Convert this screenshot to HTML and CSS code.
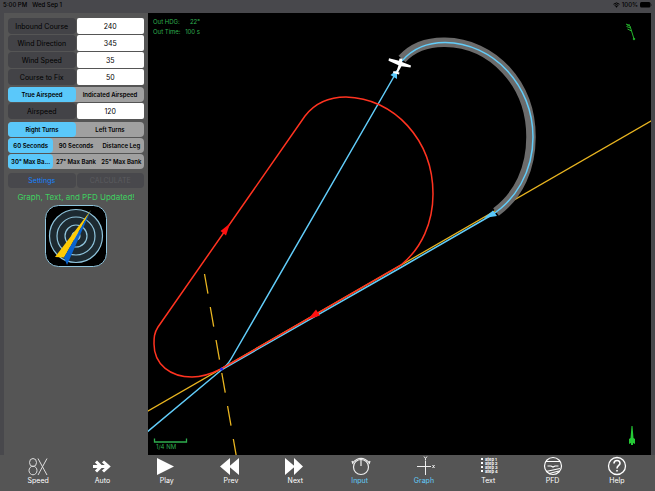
FILE: index.html
```html
<!DOCTYPE html>
<html lang="en">

<head>
  <meta charset="UTF-8">
  <meta name="viewport" content="width=device-width, initial-scale=1.0">
  <title>Holding Pattern</title>
  <link rel="stylesheet" href="styles.css">
</head>

<body>
  <header class="status">
    <span>5:00 PM</span>
    <span>Wed Sep 1</span>
    <span class="battery">
      <svg width="7" height="6" viewBox="0 0 14 12">
        <path d="M1 4.500Q7-1 13 4.500M3.300 7Q7 3.500 10.700 7" fill="none" stroke="#000" stroke-width="2" />
        <path d="M4.500 8.500Q7 6 9.500 8.500L7 11.500z" />
      </svg>
      100%
      <svg width="12" height="6" viewBox="0 0 24 12">
        <rect width="21" height="11" rx="3" />
        <path d="M22 4v4q2-2 0-4" />
      </svg>
    </span>
  </header>

  <main class="main">
    <form class="panel">
      <div class="fields">
        <label for="inbound">Inbound Course</label>
        <input type="text" id="inbound" value="240">
        <label for="winddir">Wind Direction</label>
        <input type="text" id="winddir" value="345">
        <label for="windspeed">Wind Speed</label>
        <input type="text" id="windspeed" value="35">
        <label for="fix">Course to Fix</label>
        <input type="text" id="fix" value="50">
      </div>
      <div class="segment">
        <label><input type="radio" name="speedtype" checked>True Airspeed</label>
        <label><input type="radio" name="speedtype">Indicated Airspeed</label>
      </div>
      <div class="fields">
        <label for="airspeed">Airspeed</label>
        <input type="text" id="airspeed" value="120">
      </div>
      <div class="segments">
        <div class="segment">
          <label><input type="radio" name="turns" checked>Right Turns</label>
          <label><input type="radio" name="turns">Left Turns</label>
        </div>
        <div class="segment">
          <label><input type="radio" name="leg" checked>60 Seconds</label>
          <label><input type="radio" name="leg">90 Seconds</label>
          <label><input type="radio" name="leg">Distance Leg</label>
        </div>
        <div class="segment">
          <label><input type="radio" name="bank" checked>30° Max Ba...</label>
          <label><input type="radio" name="bank">27° Max Bank</label>
          <label><input type="radio" name="bank">25° Max Bank</label>
        </div>
      </div>
      <div class="actions">
        <button type="button" class="settings">Settings</button>
        <button type="button" class="calculate" disabled>CALCULATE</button>
      </div>
      <p class="message">Graph, Text, and PFD Updated!</p>
      <svg class="logo" width="62" height="62" viewBox="0 0 62 62">
        <rect x="0.500" y="0.500" width="61" height="61" rx="13" fill="#000" stroke="#8fc4dc" />
        <g fill="#1d2a31" stroke="#8fc4dc" stroke-width="1.200">
          <circle cx="31" cy="31" r="26.500" />
          <circle cx="31" cy="31" r="19" />
          <circle cx="31" cy="31" r="11" />
          <circle cx="31" cy="31" r="4" fill="#b9dcea" />
        </g>
        <path d="M46 5L10 52l9 0.500z" fill="#ffcb05" />
        <path d="M46 5L19 52.500l3 7.500z" fill="#0a63cf" />
      </svg>
    </form>

    <svg class="graph" viewBox="148 13 503 442" preserveAspectRatio="xMidYMid slice">
      <!-- inbound course and abeam line -->
      <g fill="none" stroke="#e9b520" stroke-width="1.300">
        <path d="M652 120.500L147 411.500" />
        <path d="M204.500 274L237 460" stroke-dasharray="20 13.500" />
      </g>

      <!-- flown track -->
      <path d="M402 59C413 47 428 42 445 42.300C493 43 531 84 531 137C531 168 519 195 496 212" fill="none" stroke="#6b6b6b" stroke-width="9.500" />
      <g fill="none" stroke="#62cdfa" stroke-width="1.500">
        <path d="M402 61C413 48 428 42.500 445 42.500C493 43 533 85 533 137C533 172 515 201 490 216L400 268L222 369.500L147 432" />
        <path d="M396 73L231 359Q227 366 221 369" />
      </g>

      <!-- hold -->
      <path d="M221 369L401 265C422 248 433 222 433 194C433 140 394 98 346 97C329 97 315 103 305 116L158 327C154 333 154 338 154 344C154 365 171 377 192 377C203 377 213 373 221 369" fill="none" stroke="#ff3320" stroke-width="1.500" />
      <path d="M230 223.500L220.500 231L226 235.500z" fill="#ff1010" />
      <path d="M308 319.500L316 309.500L320 315.500z" fill="#ff1010" />
      <path d="M484 218L493 210.500L497 216z" fill="#5ac8fa" />
      <path d="M397 70L390.500 75L397 79z" fill="#5ac8fa" />
      <circle cx="221.500" cy="369" r="1.500" fill="#2222ff" />

      <!-- airplane -->
      <g fill="#fff">
        <path d="M399.500 58.500h3l-0.500 3.500l9 3.500l-0.500 2l-9-1.300l-4 7l-1.500-0.500l2.500-7.500l-10-4.500l0.500-2.500l10 2.500z" />
        <path d="M393.500 71l6 1.500l-0.500 2l-6-1.500z" />
      </g>

      <!-- wind arrow -->
      <g stroke="#24b52c" stroke-width="1" fill="none">
        <path d="M634 39L630 26M630 26l-4-2M630.500 28l-4-1.500M631.500 31l-4-2M630 25l-3 0" />
        <circle cx="634" cy="39" r="0.800" fill="#24b52c" />
      </g>

      <!-- north arrow -->
      <path d="M631.500 426h1l1 12l1.500 1v5l-2-1v2h-2v-2l-2 1v-5l1.500-1z" fill="#25c936" />

      <!-- scale and readout -->
      <path d="M154.500 438.500v3.500h32v-3.500" fill="none" stroke="#2fae4f" stroke-width="1.300" />
      <g class="readout">
        <text x="156" y="449">1/4 NM</text>
        <text x="153" y="24">Out HDG:</text>
        <text x="200" y="24" text-anchor="end">22°</text>
        <text x="153" y="34">Out Time:</text>
        <text x="200" y="34" text-anchor="end">100 s</text>
      </g>
    </svg>
  </main>

  <nav class="toolbar">
    <button type="button">
      <svg width="22" height="20" viewBox="0 0 22 20" fill="none" stroke="#ddd">
        <ellipse cx="6" cy="6.500" rx="3.500" ry="4" />
        <ellipse cx="6" cy="14.500" rx="4" ry="4.300" />
        <path d="M11 2.500l9 16.500M20 2.500l-9 16.500" />
      </svg>
      Speed
    </button>
    <button type="button">
      <svg width="22" height="20" viewBox="0 0 22 20" fill="none" stroke="#fff" stroke-width="3">
        <path d="M2 10.500h16M5 5.500l5 5-5 5M12 5.500l5.500 5-5.500 5" />
      </svg>
      Auto
    </button>
    <button type="button">
      <svg width="22" height="20" viewBox="0 0 22 20" fill="#fff">
        <path d="M1 2l17 8.500L1 19z" />
      </svg>
      Play
    </button>
    <button type="button">
      <svg width="22" height="20" viewBox="0 0 22 20" fill="#fff">
        <path d="M10 2v17L0 10.500zM19 2v17l-10-8.500z" />
      </svg>
      Prev
    </button>
    <button type="button">
      <svg width="22" height="20" viewBox="0 0 22 20" fill="#fff">
        <path d="M1 2v17l10-8.500zM10 2v17l9-8.500z" />
      </svg>
      Next
    </button>
    <button type="button" class="active">
      <svg width="22" height="20" viewBox="0 0 22 20" fill="none" stroke="#eee" stroke-width="1.200">
        <circle cx="12" cy="11" r="7.500" />
        <path d="M12 2v8M3.500 7Q12-2.500 20.500 7M3 5l1 3M21 5l-1 3" />
      </svg>
      Input
    </button>
    <button type="button" class="active">
      <svg width="22" height="20" viewBox="0 0 22 20" fill="none" stroke="#eee">
        <path d="M12.500 4.500V19M4 10.500h14M11 0.500l1.500 2 1.500-2M12.500 2.500v1.500M19.500 9l2 3M21.500 9l-2 3" />
      </svg>
      Graph
    </button>
    <button type="button">
      <svg class="steps" width="22" height="20" viewBox="0 0 22 20" fill="#fff">
        <path d="M4 2h2v2H4zM4 6h2v2H4zM4 10h2v2H4zM4 14h2v2H4z" />
        <text x="8" y="4.500">Step 1</text>
        <text x="8" y="8.500">Step 2</text>
        <text x="8" y="12.500">Step 3</text>
        <text x="8" y="16.500">Step 4</text>
      </svg>
      Text
    </button>
    <button type="button">
      <svg width="22" height="20" viewBox="0 0 22 20" fill="none" stroke="#fff" stroke-width="1.200">
        <circle cx="11" cy="10" r="8.500" />
        <path d="M4 5.500h14M5.500 10h3.500l2 1 2-1h3.500M4 15.500l14-3M7 17.500l10-2.500" />
      </svg>
      PFD
    </button>
    <button type="button">
      <svg width="22" height="20" viewBox="0 0 22 20" fill="none" stroke="#fff" stroke-width="1.300">
        <circle cx="11" cy="10" r="8.500" />
        <path d="M8 7.500C8 3.500 14 3.500 14 7.300C14 9.500 11 9.500 11 12.500M11 14v1.500" stroke-width="1.600" />
      </svg>
      Help
    </button>
  </nav>
</body>

</html>
```

FILE: styles.css
```css
* {
  margin: 0;
  padding: 0;
  box-sizing: border-box;
}

body {
  display: flex;
  flex-direction: column;
  min-height: 100vh;
  background-color: #48484c;
  color: #000;
  font-family: Inter, "Liberation Sans", sans-serif;
  font-size: 7px;
}

button,
input {
  border: 0;
  font: inherit;
}

.status {
  display: flex;
  gap: 5px;
  padding: 0 3px;
  height: 13px;
  font-size: 6px;
  font-weight: 500;
  line-height: 10px;
}

.battery {
  display: flex;
  align-items: center;
  gap: 2px;
  margin-left: auto;
  height: 10px;
}

.main {
  flex: 1;
  display: flex;
  padding: 0 4px;
}

.panel {
  flex: none;
  width: 144px;
  padding: 5px 4px;
  background-color: #555;
}

.graph {
  flex: 1;
  min-width: 0;
  height: calc(100vh - 49px);
  background-color: #000;
}

.readout {
  fill: #2fae4f;
  font-size: 6px;
}

/* label and value rows */
.fields {
  display: grid;
  grid-template-columns: 1fr 1fr;
  grid-auto-rows: 16px;
  gap: 1px;
}

.fields label {
  border-radius: 4px;
  background-color: #434347;
  line-height: 18px;
  text-align: center;
}

.fields input {
  width: 100%;
  border-radius: 2px;
  background-color: #fff;
  text-align: center;
}

/* segmented controls */
.segments {
  display: grid;
  gap: 1px;
  margin-top: 3px;
}

.segment {
  display: flex;
  height: 15px;
  border-radius: 4px;
  background-color: #a0a0a0;
  font-size: 6px;
  font-weight: 600;
  line-height: 16px;
}

.fields + .segment {
  margin: 2px 0 1px;
}

.segment label {
  position: relative;
  flex: 1 1 0;
  border-radius: 4px;
  text-align: center;
  white-space: nowrap;
}

.segment label:has(:checked) {
  background-color: #5ac8fa;
}

.segment input {
  position: absolute;
  opacity: 0;
}

.actions {
  display: grid;
  grid-template-columns: 1fr 1fr;
  gap: 1px;
  margin-top: 4px;
}

.actions button {
  height: 15px;
  border-radius: 4px;
  background-color: #48484c;
}

.actions .settings {
  color: #1583ff;
}

.actions .calculate {
  color: #5b5b5f;
}

.message {
  margin-top: 3px;
  color: #3fd060;
  font-size: 8px;
  line-height: 12px;
  text-align: center;
}

.logo {
  display: block;
  margin: 2px auto 0;
}

.toolbar {
  display: grid;
  grid-template-columns: repeat(10, 1fr);
  height: 36px;
  padding: 1px 6px 0;
  background-color: #555;
}

.toolbar button {
  display: flex;
  flex-direction: column;
  align-items: center;
  background: none;
  color: #fff;
  line-height: 9px;
}

.toolbar .active {
  color: #62cdfa;
}

.steps {
  font-size: 4px;
  font-weight: 700;
}
```
